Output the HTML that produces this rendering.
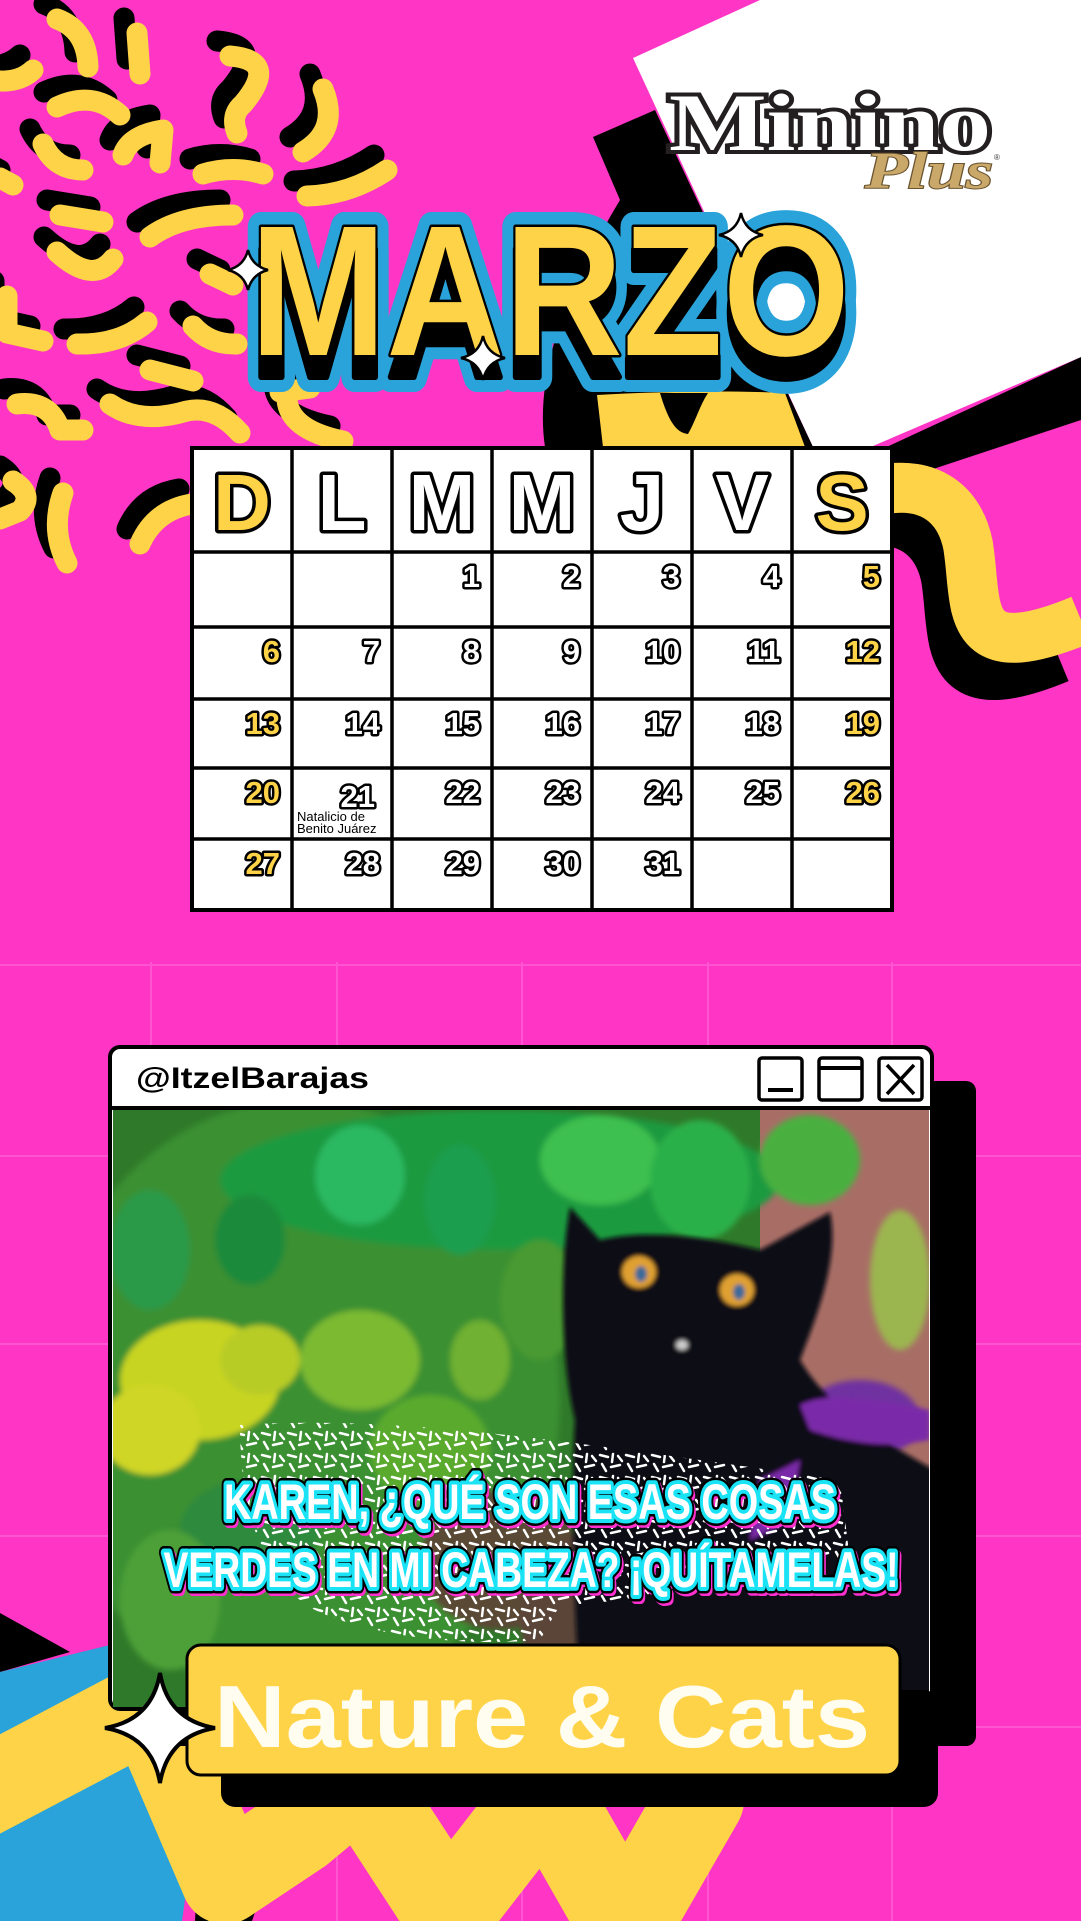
<!DOCTYPE html>
<html><head><meta charset="utf-8"><style>
html,body{margin:0;padding:0;background:#ff35c6;}
svg{display:block}
</style></head><body>
<svg width="1081" height="1921" viewBox="0 0 1081 1921" xmlns="http://www.w3.org/2000/svg" font-family="Liberation Sans, sans-serif">
<defs>
<filter id="blur" x="-10%" y="-10%" width="120%" height="120%"><feGaussianBlur stdDeviation="3"/></filter>
<filter id="blur2"><feGaussianBlur stdDeviation="2"/></filter>
<pattern id="dash" width="26" height="22" patternUnits="userSpaceOnUse">
<g stroke="#fff" stroke-width="2.5" stroke-linecap="round">
<line x1="2" y1="3" x2="10" y2="5"/><line x1="15" y1="2" x2="14" y2="10"/><line x1="4" y1="12" x2="8" y2="19"/><line x1="13" y1="15" x2="22" y2="13"/><line x1="20" y1="4" x2="24" y2="9"/>
</g></pattern>
<clipPath id="photo"><rect x="113" y="1110" width="816" height="597"/></clipPath>
</defs>

<rect width="1081" height="1921" fill="#ff35c6"/>
<g stroke="#ff55d2" stroke-width="2">
<line x1="151" y1="962" x2="151" y2="1921"/><line x1="337" y1="962" x2="337" y2="1921"/><line x1="522" y1="962" x2="522" y2="1921"/><line x1="708" y1="962" x2="708" y2="1921"/><line x1="892" y1="962" x2="892" y2="1921"/>
<line x1="0" y1="965" x2="1081" y2="965"/><line x1="0" y1="1156" x2="1081" y2="1156"/><line x1="0" y1="1344" x2="1081" y2="1344"/><line x1="0" y1="1536" x2="1081" y2="1536"/><line x1="0" y1="1727" x2="1081" y2="1727"/>
</g>

<!-- top right shapes -->
<polygon points="1081,357 1081,420 900,480 880,450" fill="#000"/>
<polygon points="633,58 760,0 1081,0 1081,357 873,446 813,447" fill="#fff"/>
<path d="M593,137 L655,110 L813,447 L545,447 C535,380 560,300 620,200 Z" fill="#000"/>
<path d="M597,395 C650,392 720,390 785,393 L805,447 L603,447 Z" fill="#ffd347"/>
<path d="M660,393 C668,420 676,433 688,434 C696,420 700,405 708,393 Z" fill="#000"/>
<!-- right squiggle -->
<path d="M880,505 C930,495 960,520 968,560 C978,620 960,690 1081,640" fill="none" stroke="#000" stroke-width="50" transform="translate(-22,18)"/>
<path d="M880,490 C930,480 960,505 968,545 C978,605 960,670 1081,620" fill="none" stroke="#ffd347" stroke-width="50"/>

<!-- left worms -->
<g fill="none" stroke-linecap="round" stroke-linejoin="round" stroke-width="21">
<g stroke="#000" transform="translate(-13,-15)">
<path d="M57,19 Q87,30 88,67"/><path d="M137,33 L140,74"/><path d="M0,81 Q20,82 33,70"/><path d="M57,107 Q93,90 120,115"/><path d="M230,56 Q280,60 243,104 Q230,115 237,133"/><path d="M323,89 Q340,130 303,152"/><path d="M43,144 Q55,170 83,170"/><path d="M123,155 Q130,135 163,130 L160,163"/><path d="M203,174 Q233,165 263,174"/><path d="M307,196 Q350,195 387,170"/><path d="M0,178 L13,185"/><path d="M60,215 L103,222"/><path d="M150,237 Q180,215 233,215"/><path d="M57,252 Q93,285 113,259"/><path d="M7,296 L7,333 L43,341"/><path d="M210,274 L233,285"/><path d="M77,344 Q120,345 147,322"/><path d="M193,326 Q210,345 237,344"/><path d="M150,370 L193,381"/><path d="M17,404 Q50,400 60,430 L83,430"/><path d="M110,404 Q140,425 187,411 Q215,405 240,433"/><path d="M287,400 Q290,430 343,441"/><path d="M13,481 Q35,495 20,511 L0,519"/><path d="M63,493 Q50,530 67,563"/><path d="M140,544 Q155,510 192,504"/><path d="M280,392 L310,388"/>
</g>
<g stroke="#ffd347">
<path d="M57,19 Q87,30 88,67"/><path d="M137,33 L140,74"/><path d="M0,81 Q20,82 33,70"/><path d="M57,107 Q93,90 120,115"/><path d="M230,56 Q280,60 243,104 Q230,115 237,133"/><path d="M323,89 Q340,130 303,152"/><path d="M43,144 Q55,170 83,170"/><path d="M123,155 Q130,135 163,130 L160,163"/><path d="M203,174 Q233,165 263,174"/><path d="M307,196 Q350,195 387,170"/><path d="M0,178 L13,185"/><path d="M60,215 L103,222"/><path d="M150,237 Q180,215 233,215"/><path d="M57,252 Q93,285 113,259"/><path d="M7,296 L7,333 L43,341"/><path d="M210,274 L233,285"/><path d="M77,344 Q120,345 147,322"/><path d="M193,326 Q210,345 237,344"/><path d="M150,370 L193,381"/><path d="M17,404 Q50,400 60,430 L83,430"/><path d="M110,404 Q140,425 187,411 Q215,405 240,433"/><path d="M287,400 Q290,430 343,441"/><path d="M13,481 Q35,495 20,511 L0,519"/><path d="M63,493 Q50,530 67,563"/><path d="M140,544 Q155,510 192,504"/><path d="M280,392 L310,388"/>
</g></g>

<!-- logo -->
<text x="669" y="150" font-family="Liberation Serif, serif" font-weight="bold" font-size="82" textLength="322" lengthAdjust="spacingAndGlyphs" fill="#fff" stroke="#231f20" stroke-width="8" paint-order="stroke">Minino</text>
<text x="865" y="188" font-family="Liberation Serif, serif" font-style="italic" font-weight="bold" font-size="52" textLength="128" lengthAdjust="spacingAndGlyphs" fill="#c9a86a" stroke="#6b5530" stroke-width="2" paint-order="stroke">Plus</text>
<text x="994" y="160" font-size="8" fill="#333">®</text>

<!-- MARZO -->
<g font-weight="bold" font-size="186" text-anchor="start" stroke-linejoin="round">
<text x="250" y="377" textLength="600" lengthAdjust="spacingAndGlyphs" fill="#29a3d9" stroke="#29a3d9" stroke-width="30">MARZO</text>
<text x="250" y="355" textLength="600" lengthAdjust="spacingAndGlyphs" fill="#29a3d9" stroke="#29a3d9" stroke-width="30">MARZO</text>
<text x="250" y="377" textLength="600" lengthAdjust="spacingAndGlyphs" fill="#000" stroke="#000" stroke-width="6">MARZO</text>
<text x="250" y="355" textLength="600" lengthAdjust="spacingAndGlyphs" fill="#ffd347" stroke="#000" stroke-width="5" paint-order="stroke">MARZO</text>
</g>
<g fill="#fff" stroke="#000" stroke-width="2.5">
<path d="M248,250 Q252,266 268,270 Q252,274 248,290 Q244,274 228,270 Q244,266 248,250Z"/>
<path d="M741,213 Q745,231 763,235 Q745,239 741,257 Q737,239 719,235 Q737,231 741,213Z"/>
<path d="M483,336 Q487,354 505,358 Q487,362 483,380 Q479,362 461,358 Q479,354 483,336Z"/>
</g>

<!-- calendar -->
<rect x="192" y="448" width="700" height="462" fill="#fff" stroke="#000" stroke-width="4"/>
<g stroke="#000" stroke-width="3.5">
<line x1="292" y1="448" x2="292" y2="910"/><line x1="392" y1="448" x2="392" y2="910"/><line x1="492" y1="448" x2="492" y2="910"/><line x1="592" y1="448" x2="592" y2="910"/><line x1="692" y1="448" x2="692" y2="910"/><line x1="792" y1="448" x2="792" y2="910"/>
<line x1="192" y1="552" x2="892" y2="552"/><line x1="192" y1="627" x2="892" y2="627"/><line x1="192" y1="699" x2="892" y2="699"/><line x1="192" y1="768" x2="892" y2="768"/><line x1="192" y1="839" x2="892" y2="839"/>
</g>
<g font-weight="bold" font-size="80" text-anchor="middle" stroke="#000" stroke-width="7" paint-order="stroke" stroke-linejoin="round">
<text x="242" y="530" fill="#ffd347">D</text><text x="342" y="530" fill="#fff">L</text><text x="442" y="530" fill="#fff">M</text><text x="542" y="530" fill="#fff">M</text><text x="642" y="530" fill="#fff">J</text><text x="742" y="530" fill="#fff">V</text><text x="842" y="530" fill="#ffd347">S</text>
</g>
<g font-weight="bold" font-size="31" text-anchor="end" stroke="#000" stroke-width="5" paint-order="stroke" stroke-linejoin="round" fill="#fff">
<text x="480" y="587">1</text><text x="580" y="587">2</text><text x="680" y="587">3</text><text x="780" y="587">4</text><text x="880" y="587" fill="#ffd347">5</text>
<text x="280" y="662" fill="#ffd347">6</text><text x="380" y="662">7</text><text x="480" y="662">8</text><text x="580" y="662">9</text><text x="680" y="662">10</text><text x="780" y="662">11</text><text x="880" y="662" fill="#ffd347">12</text>
<text x="280" y="734" fill="#ffd347">13</text><text x="380" y="734">14</text><text x="480" y="734">15</text><text x="580" y="734">16</text><text x="680" y="734">17</text><text x="780" y="734">18</text><text x="880" y="734" fill="#ffd347">19</text>
<text x="280" y="803" fill="#ffd347">20</text><text x="375" y="807">21</text><text x="480" y="803">22</text><text x="580" y="803">23</text><text x="680" y="803">24</text><text x="780" y="803">25</text><text x="880" y="803" fill="#ffd347">26</text>
<text x="280" y="874" fill="#ffd347">27</text><text x="380" y="874">28</text><text x="480" y="874">29</text><text x="580" y="874">30</text><text x="680" y="874">31</text>
</g>
<text x="297" y="821" font-size="13" fill="#000">Natalicio de</text>
<text x="297" y="833" font-size="13" fill="#000">Benito Juárez</text>

<!-- bottom-left decorations -->
<polygon points="0,1613 70,1652 0,1672" fill="#000"/>
<polygon points="0,1672 110,1645 205,1760 182,1921 0,1921" fill="#29a3d9"/>
<polygon points="200,1835 272,1862 252,1921 195,1921" fill="#000"/>
<polyline points="-40,1805 150,1705 225,1880 300,1830 360,1780 448,1915 545,1790 625,1930 700,1800" fill="none" stroke="#ffd347" stroke-width="88" stroke-linejoin="round" stroke-linecap="round"/>

<!-- window shadow -->
<rect x="140" y="1081" width="836" height="665" rx="10" fill="#000"/>
<rect x="110" y="1047" width="822" height="662" rx="10" fill="#fff" stroke="#000" stroke-width="4"/>
<g clip-path="url(#photo)">
<rect x="110" y="1108" width="824" height="602" fill="#2f7a2a"/>
<rect x="760" y="1108" width="175" height="602" fill="#a86e66"/>
<g filter="url(#blur)">
<ellipse cx="300" cy="1400" rx="260" ry="300" fill="#3a9030"/>
<ellipse cx="200" cy="1380" rx="80" ry="60" fill="#c8d420"/>
<ellipse cx="150" cy="1430" rx="50" ry="45" fill="#d0d628"/>
<ellipse cx="260" cy="1360" rx="40" ry="35" fill="#b8cc28"/>
<ellipse cx="360" cy="1360" rx="60" ry="50" fill="#7cba30"/>
<ellipse cx="430" cy="1450" rx="60" ry="55" fill="#5aaa2e"/>
<ellipse cx="250" cy="1530" rx="70" ry="50" fill="#2e8a3c"/>
<ellipse cx="170" cy="1600" rx="50" ry="70" fill="#4ea038"/>
<ellipse cx="500" cy="1560" rx="80" ry="70" fill="#5a4a34"/>
<ellipse cx="500" cy="1180" rx="280" ry="70" fill="#1f9a40"/>
<ellipse cx="360" cy="1175" rx="45" ry="50" fill="#2ab860"/>
<ellipse cx="460" cy="1200" rx="35" ry="55" fill="#1e9e50"/>
<ellipse cx="600" cy="1160" rx="60" ry="45" fill="#3cc050"/>
<ellipse cx="700" cy="1180" rx="50" ry="60" fill="#2cb048"/>
<ellipse cx="810" cy="1160" rx="50" ry="45" fill="#48b040"/>
<ellipse cx="150" cy="1250" rx="40" ry="60" fill="#2a9a4a"/>
<ellipse cx="250" cy="1240" rx="35" ry="45" fill="#1e8a3a"/>
<ellipse cx="900" cy="1280" rx="30" ry="70" fill="#9bb550"/>
<ellipse cx="540" cy="1300" rx="40" ry="60" fill="#4a9a30"/>
<ellipse cx="480" cy="1360" rx="30" ry="40" fill="#70b030"/>
<ellipse cx="600" cy="1620" rx="80" ry="90" fill="#5a4438"/>
<ellipse cx="860" cy="1420" rx="60" ry="40" fill="#7030a0"/>
</g>
<g filter="url(#blur2)">
<path d="M570,1207 L600,1240 C640,1230 700,1235 760,1250 L830,1212 C840,1260 815,1320 800,1360 C830,1410 880,1440 935,1470 L935,1710 L580,1710 C575,1620 570,1500 575,1420 C560,1360 560,1260 570,1207Z" fill="#0d0a12"/>
<ellipse cx="639" cy="1272" rx="17" ry="16" fill="#e0a030"/>
<ellipse cx="737" cy="1290" rx="17" ry="16" fill="#e0a030"/>
<ellipse cx="641" cy="1274" rx="6" ry="8" fill="#3a6a9a"/>
<ellipse cx="739" cy="1292" rx="6" ry="8" fill="#3a6a9a"/>
<ellipse cx="682" cy="1345" rx="6" ry="5" fill="#ccc"/>
<path d="M800,1405 C830,1390 880,1400 930,1410 L930,1440 C880,1450 840,1440 810,1430Z" fill="#7a2aa8"/>
<path d="M760,1480 L800,1460 L790,1520 L750,1540Z" fill="#7a2aa8"/>
</g>
<path d="M240,1425 C400,1415 560,1440 840,1480 L850,1560 C700,1560 700,1600 560,1605 L540,1640 C420,1650 320,1620 300,1600 C250,1560 240,1480 240,1425Z" fill="url(#dash)"/>
</g>
<line x1="110" y1="1108" x2="932" y2="1108" stroke="#000" stroke-width="4"/>
<text x="136" y="1088" font-weight="bold" font-size="30" textLength="233" lengthAdjust="spacingAndGlyphs" fill="#000">@ItzelBarajas</text>
<g fill="#fff" stroke="#000" stroke-width="3.5">
<rect x="759" y="1058" width="43" height="42" rx="3"/>
<rect x="819" y="1058" width="43" height="42" rx="3"/>
<rect x="879" y="1058" width="43" height="42" rx="3"/>
</g>
<line x1="768" y1="1090" x2="793" y2="1090" stroke="#000" stroke-width="4"/>
<line x1="819" y1="1068" x2="862" y2="1068" stroke="#000" stroke-width="4"/>
<path d="M887,1065 L914,1094 M914,1065 L887,1094" stroke="#000" stroke-width="3.5"/>

<g font-weight="bold" font-size="50" text-anchor="middle" stroke-linejoin="round">
<text x="532" y="1522" textLength="612" lengthAdjust="spacingAndGlyphs" fill="#ff2fd0" stroke="#ff2fd0" stroke-width="12">KAREN, ¿QUÉ SON ESAS COSAS</text>
<text x="530" y="1519" textLength="612" lengthAdjust="spacingAndGlyphs" fill="#000" stroke="#000" stroke-width="13">KAREN, ¿QUÉ SON ESAS COSAS</text>
<text x="530" y="1519" textLength="612" lengthAdjust="spacingAndGlyphs" fill="#fff" stroke="#19e3f5" stroke-width="8" paint-order="stroke">KAREN, ¿QUÉ SON ESAS COSAS</text>
<text x="533" y="1590" textLength="735" lengthAdjust="spacingAndGlyphs" fill="#ff2fd0" stroke="#ff2fd0" stroke-width="12">VERDES EN MI CABEZA? ¡QUÍTAMELAS!</text>
<text x="531" y="1587" textLength="735" lengthAdjust="spacingAndGlyphs" fill="#000" stroke="#000" stroke-width="13">VERDES EN MI CABEZA? ¡QUÍTAMELAS!</text>
<text x="531" y="1587" textLength="735" lengthAdjust="spacingAndGlyphs" fill="#fff" stroke="#19e3f5" stroke-width="8" paint-order="stroke">VERDES EN MI CABEZA? ¡QUÍTAMELAS!</text>
</g>

<rect x="221" y="1690" width="717" height="117" rx="14" fill="#000"/>
<rect x="187" y="1645" width="713" height="130" rx="14" fill="#ffd347" stroke="#000" stroke-width="3"/>
<text x="214" y="1747" font-weight="bold" font-size="88" textLength="656" lengthAdjust="spacingAndGlyphs" fill="#fffdf0">Nature &amp; Cats</text>
<path d="M160,1673 Q168,1720 215,1728 Q168,1736 160,1783 Q152,1736 105,1728 Q152,1720 160,1673Z" fill="#fff" stroke="#000" stroke-width="4"/>
</svg>
</body></html>
